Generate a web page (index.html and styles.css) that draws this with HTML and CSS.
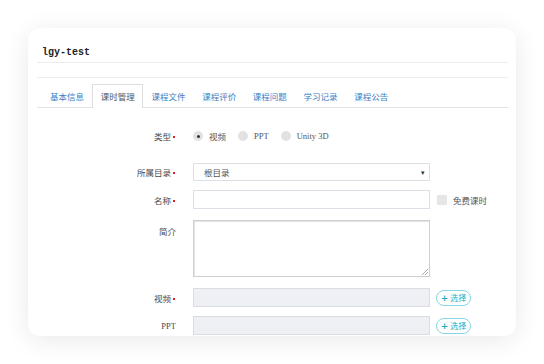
FILE: index.html
```html
<!DOCTYPE html>
<html>
<head>
  <title>lgy-test - 课时管理</title>
  <link rel="stylesheet" href="styles.css">
</head>
<body>
  <div class="card">
    <div class="card-header">
      <h1>lgy-test</h1>
    </div>
    <div class="card-gap"></div>

    <ul class="tabs">
      <li class="tab">基本信息</li>
      <li class="tab active">课时管理</li>
      <li class="tab">课程文件</li>
      <li class="tab">课程评价</li>
      <li class="tab">课程问题</li>
      <li class="tab">学习记录</li>
      <li class="tab">课程公告</li>
    </ul>

    <form class="lesson-form">
      <div class="form-row row-type">
        <label class="form-label required">类型</label>
        <div class="radio-group">
          <span class="radio checked"></span><span class="radio-text">视频</span>
          <span class="radio"></span><span class="radio-text latin">PPT</span>
          <span class="radio"></span><span class="radio-text latin">Unity 3D</span>
        </div>
      </div>

      <div class="form-row row-select">
        <label class="form-label required">所属目录</label>
        <div class="select">根目录<span class="select-arrow">&#9662;</span></div>
      </div>

      <div class="form-row row-name">
        <label class="form-label required">名称</label>
        <div class="input"></div>
        <span class="checkbox"></span><span class="checkbox-text">免费课时</span>
      </div>

      <div class="form-row row-intro">
        <label class="form-label">简介</label>
        <div class="textarea"><span class="resize-handle"></span></div>
      </div>

      <div class="form-row row-file">
        <label class="form-label required">视频</label>
        <div class="input disabled"></div>
        <button type="button" class="pick-btn"><b>+</b> 选择</button>
      </div>

      <div class="form-row row-file">
        <label class="form-label latin">PPT</label>
        <div class="input disabled"></div>
        <button type="button" class="pick-btn"><b>+</b> 选择</button>
      </div>
    </form>
  </div>
</body>
</html>
```

FILE: styles.css
```css
:root {
  --line-color: #ececec;
  --tab-blue: #3b7fc4;
  --label-color: #4a4a4a;
  --input-border: #dcdfe6;
  --cyan: #25aac4;
}

html, body {
  margin: 0;
  padding: 0;
  background: #ffffff;
}

body {
  padding: 28px;
  font-family: "Noto Sans CJK SC", "Noto Sans", sans-serif;
  font-size: 8.5px;
  color: var(--label-color);
}

.card {
  width: 488px;
  height: 308px;
  box-sizing: border-box;
  padding: 0 8px 0 9px;
  background: #fff;
  border-radius: 12px;
  box-shadow: 0 4px 26px rgba(0, 0, 0, 0.09);
  overflow: hidden;
}

.card-header {
  height: 35px;
  box-sizing: border-box;
  padding: 18px 0 0 5px;
  border-bottom: 1px solid var(--line-color);
}

h1 {
  margin: 0;
  font-family: "Liberation Mono", monospace;
  font-size: 10px;
  line-height: 13px;
  font-weight: bold;
  color: #222;
}

.card-gap {
  height: 14px;
  border-bottom: 1px solid var(--line-color);
}

.tabs {
  display: flex;
  list-style: none;
  margin: 6px 0 0;
  padding: 0 0 0 4.7px;
  border-bottom: 1px solid #e3e3e3;
}

.tab {
  height: 23px;
  box-sizing: border-box;
  padding: 0 7.35px;
  line-height: 22px;
  border: 1px solid transparent;
  border-bottom: none;
  color: var(--tab-blue);
  white-space: nowrap;
}

.tab.active {
  color: #555;
  background: #fff;
  border-color: #dedede;
  height: 24px;
  margin-bottom: -1px;
}

.lesson-form {
  padding-top: 19px;
}

.form-row {
  display: flex;
  align-items: center;
}

.form-label {
  width: 139px;
  margin-right: 17px;
  text-align: right;
  color: var(--label-color);
  white-space: nowrap;
}

.form-label.required {
  padding-right: 5px;
  box-sizing: border-box;
  position: relative;
}

.form-label.required::after {
  content: "";
  position: absolute;
  right: 1px;
  top: 50%;
  width: 2px;
  height: 2px;
  background: #e02020;
}

.latin {
  font-family: "Liberation Serif", serif;
}

.row-type {
  height: 18px;
  margin-bottom: 18px;
}

.radio-group {
  display: flex;
  align-items: center;
}

.radio {
  width: 10px;
  height: 10px;
  border-radius: 50%;
  background: #e2e2e2;
  margin-right: 6px;
  display: flex;
  align-items: center;
  justify-content: center;
}

.radio.checked::after {
  content: "";
  width: 3px;
  height: 3px;
  border-radius: 50%;
  background: #333;
}

.radio-text {
  margin-right: 12px;
  color: #555;
}

.row-select {
  height: 18px;
  margin-bottom: 9px;
}

.select,
.input,
.textarea {
  width: 237px;
  box-sizing: border-box;
  border: 1px solid var(--input-border);
  background: #fff;
}

.select {
  height: 18px;
  display: flex;
  align-items: center;
  justify-content: space-between;
  padding: 0 4px 0 10px;
  color: #555;
}

.select-arrow {
  font-size: 7px;
  color: #333;
}

.row-name {
  height: 19px;
  margin-bottom: 11px;
}

.input {
  height: 19px;
}

.input.disabled {
  background: #eef0f5;
  border-color: #d8dce3;
}

.checkbox {
  width: 10px;
  height: 10px;
  margin-left: 7px;
  margin-right: 6px;
  background: #e6e6e6;
}

.checkbox-text {
  color: #555;
}

.row-intro {
  align-items: flex-start;
  margin-bottom: 11px;
}

.row-intro .form-label {
  padding-top: 4px;
  line-height: 14px;
}

.textarea {
  height: 57px;
  border: 1px solid #cfcfcf;
  box-shadow: inset 1px 1px 0 #e4e4e4;
  position: relative;
}

.resize-handle {
  position: absolute;
  right: 1px;
  bottom: 1px;
  width: 6px;
  height: 6px;
  background: linear-gradient(135deg, transparent 45%, #aaa 45%, #aaa 55%, transparent 55%, transparent 70%, #aaa 70%, #aaa 80%, transparent 80%);
}

.row-file {
  height: 19px;
  margin-bottom: 9px;
}

.pick-btn {
  margin-left: 6px;
  height: 16px;
  width: 35px;
  padding: 0;
  border: 1px solid #86d6e3;
  border-radius: 8px;
  background: #fff;
  color: var(--cyan);
  font-family: "Noto Sans CJK SC", sans-serif;
  font-size: 8px;
  line-height: 14px;
  cursor: pointer;
}

.pick-btn b {
  font-family: "DejaVu Sans", sans-serif;
  font-size: 9px;
}
```
